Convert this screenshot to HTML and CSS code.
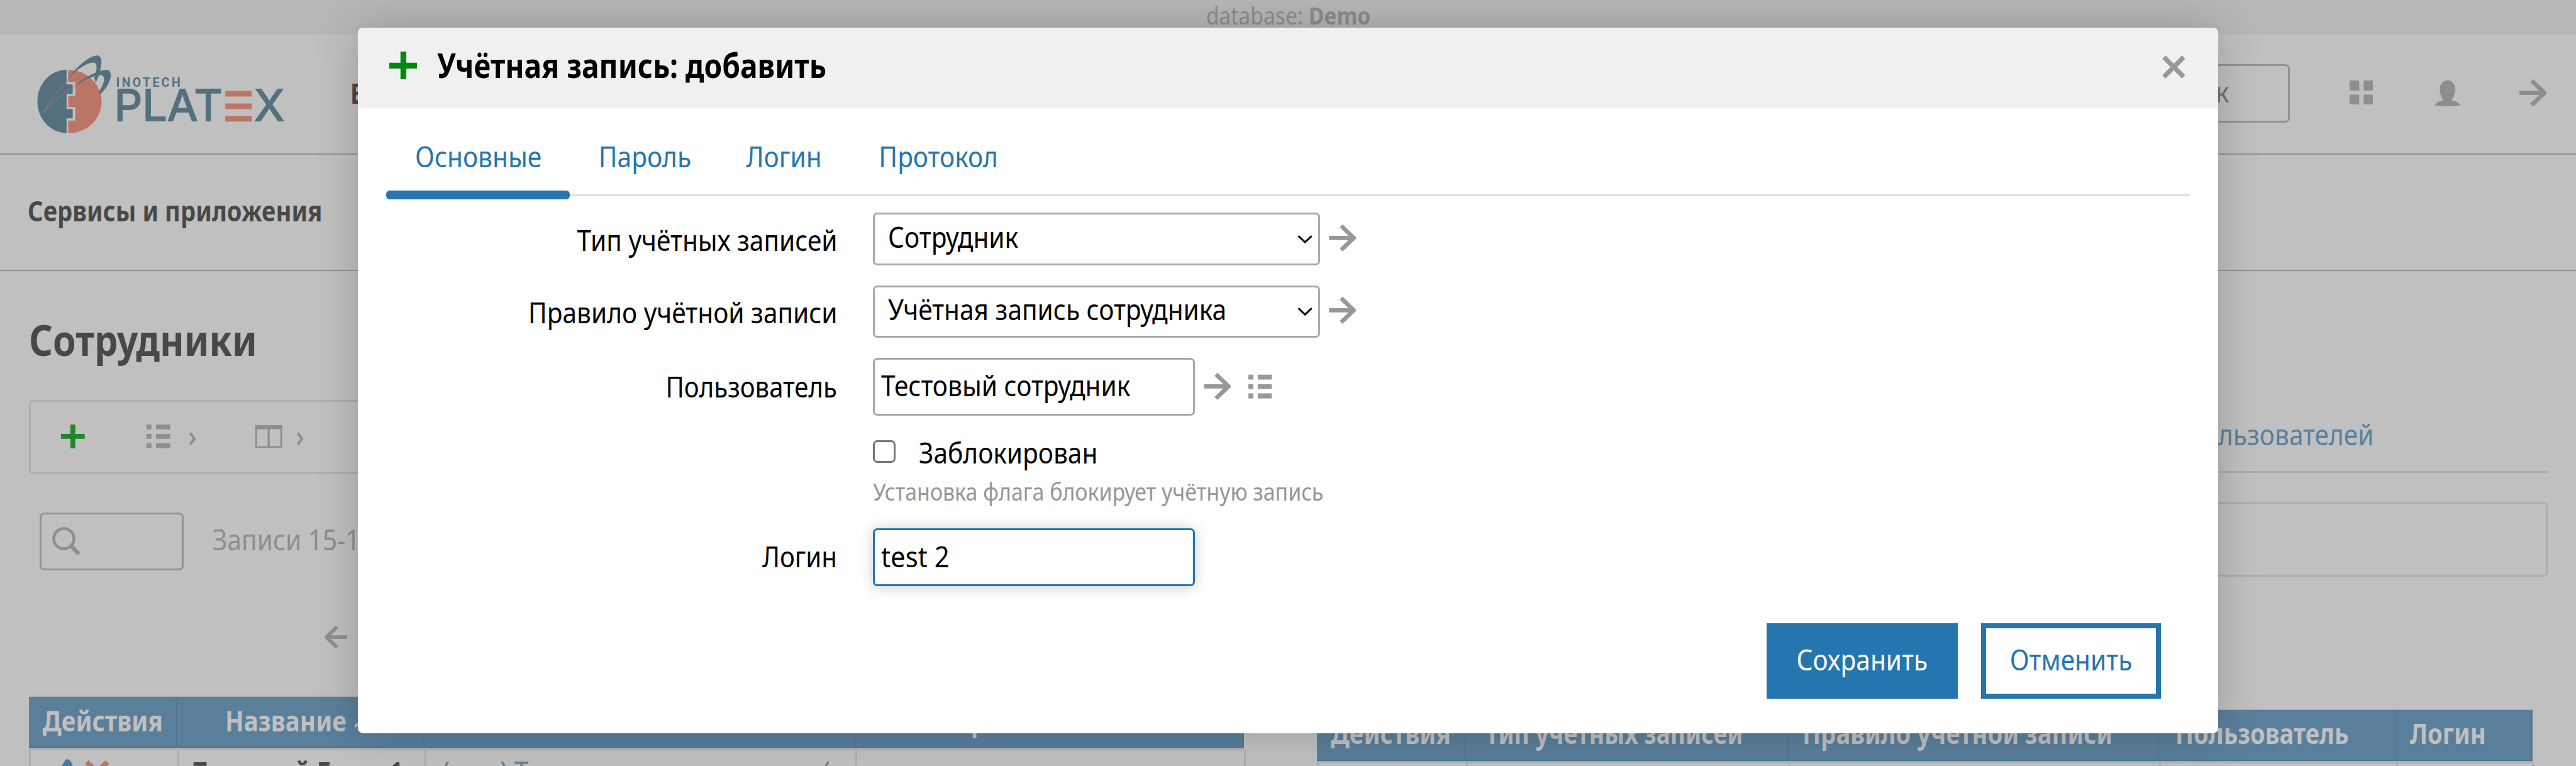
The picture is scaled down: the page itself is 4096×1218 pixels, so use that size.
FILE: index.html
```html
<!DOCTYPE html>
<html lang="ru">
<head>
<meta charset="utf-8">
<title>Platex</title>
<link rel="stylesheet" href="styles.css">
</head>
<body>
<svg width="0" height="0" class="defs">
  <symbol id="arrow" viewBox="0 0 60 60"><path d="M0 30H54M27 3L55 30L27 57" fill="none" stroke="currentColor" stroke-width="9.5"/></symbol>
  <symbol id="list" viewBox="0 0 53 53"><path d="M0 0H11V11H0ZM21 0H53V11H21ZM0 21H11V32H0ZM21 21H53V32H21ZM0 42H11V53H0ZM21 42H53V53H21Z" fill="currentColor"/></symbol>
  <symbol id="chev" viewBox="0 0 15 30"><path d="M2 2L11.500 15L2 28" fill="none" stroke="currentColor" stroke-width="5.500"/></symbol>
</svg>

<div class="topbar"><span class="t mid">database: <b>Demo</b></span></div>

<header class="header">
  <svg class="logo" viewBox="150 220 1010 330">
    <path d="M270 284A119 129 0 0 0 270 542V482H295V444H270V382H295V344H270Z" fill="#54707f"/>
    <path d="M277 284A136 129.500 0 0 1 277 543V491H306V436H277V390H306V334H277Z" fill="#bb7565"/>
    <path fill-rule="evenodd" d="M268 330C305 280 352 232 392 226C416 224 416 256 407 286C401 312 395 325 389 336L383 318C392 292 398 262 384 255C352 252 305 288 268 330Z" fill="#54707f"/>
    <path d="M300 352C345 315 398 283 436 284C458 290 452 318 440 342C430 362 416 376 405 386L403 370C420 350 430 315 416 307C390 300 340 328 300 352Z" fill="#54707f"/>
    <path d="M175 460C205 410 240 360 284 318M175 460C215 415 255 375 312 347" fill="none" stroke="#bb7565" stroke-width="2.500"/>
    <text class="logo-small" x="472" y="353" textLength="262" lengthAdjust="spacing">INOTECH</text>
    <text class="logo-word" x="464" y="493" textLength="442" lengthAdjust="spacingAndGlyphs">PLAT</text>
    <text class="logo-bars" x="909" y="491" textLength="125" lengthAdjust="spacingAndGlyphs">☰</text>
    <text class="logo-word" x="1036" y="493" textLength="122" lengthAdjust="spacingAndGlyphs">X</text>
  </svg>
  <b class="menu-item t b84">В</b>
  <div class="search-top"><span class="t">Поиск</span></div>
  <svg class="i-grid" viewBox="0 0 53 54"><path d="M0 0H21.500V22.500H0ZM31.500 0H53V22.500H31.500ZM0 31.500H21.500V54H0ZM31.500 31.500H53V54H31.500Z" fill="#8b8f8f"/></svg>
  <svg class="i-user" viewBox="0 0 58 60"><path d="M29 1C39 1 46 9 46 20C46 32 42 40 38 46C48 47 55 51 57 57C40 60 18 60 1 57C3 51 10 47 20 46C16 40 12 32 12 20C12 9 19 1 29 1Z" fill="#8b8f8f"/></svg>
  <svg class="i-exit"><use href="#arrow"/></svg>
</header>

<nav class="subnav"><b class="t b84">Сервисы и приложения</b></nav>

<main class="main">
  <section class="left">
    <h1 class="title"><span class="t b87">Сотрудники</span></h1>
    <div class="toolbar">
      <svg class="i-plus" viewBox="0 0 53 53"><path d="M0 26.500H53M26.500 0V53" fill="none" stroke="#22862a" stroke-width="11"/></svg>
      <svg class="i-list"><use href="#list"/></svg>
      <svg class="i-chev"><use href="#chev"/></svg>
      <svg class="i-table" viewBox="0 0 60 51"><path d="M0 0H60V51H0ZM4 9H27.500V47H4ZM32 9H56V47H32Z" fill="#8b8f8f" fill-rule="evenodd"/></svg>
      <svg class="i-chev last"><use href="#chev"/></svg>
    </div>
    <div class="filter">
      <div class="search"><svg class="i-search" viewBox="0 0 64 64"><circle cx="26" cy="26" r="22.500" fill="none" stroke="#8b8f8f" stroke-width="6.500"/><path d="M41 41L60 60" stroke="#8b8f8f" stroke-width="9" fill="none"/></svg></div>
      <span class="t records">Записи 15-15</span>
    </div>
    <div class="pager"><svg class="i-back"><use href="#arrow"/></svg></div>
    <div class="grid people head">
      <div class="center"><b class="t mid b85">Действия</b></div>
      <div class="name"><b class="t b85">Название</b><svg class="sort" viewBox="0 0 36 18"><path d="M3 16L18 4L33 16" fill="none" stroke="#a9b6cc" stroke-width="6"/></svg></div>
      <div></div>
      <div class="note"><b class="t b85">Примечание</b></div>
    </div>
    <div class="grid people row">
      <div class="acts">
        <svg class="i-pen" viewBox="0 0 40 60"><path d="M0 40L22 6C26 -3 42 10 38 24L16 58H0Z" fill="#437ba6"/></svg>
        <svg class="i-del" viewBox="0 0 54 54"><path d="M4 4L50 50M50 4L4 50" fill="none" stroke="#bb7565" stroke-width="12"/></svg>
      </div>
      <div class="person"><b class="t b84">Тестовый Гость 1</b></div>
      <div class="link"><span class="t">(тест) Тестовое наименование (</span></div>
      <div></div>
    </div>
  </section>
  <section class="right">
    <div class="rtabs"><span class="t to-right">Группы пользователей</span></div>
    <div class="panel"></div>
    <div class="grid accounts head">
      <div class="center"><b class="t mid b85">Действия</b></div>
      <div class="type"><b class="t b82">Тип учётных записей</b></div>
      <div><b class="t b84">Правило учётной записи</b></div>
      <div class="user"><b class="t b84">Пользователь</b></div>
      <div><b class="t b84">Логин</b></div>
    </div>
    <div class="grid accounts row"><div></div><div></div><div></div><div></div><div></div></div>
  </section>
</main>

<div class="modal">
  <div class="modal-head">
    <svg class="m-plus" viewBox="0 0 63 62"><path d="M0 31.500H63M31.500 0V62" fill="none" stroke="#008a0c" stroke-width="13"/></svg>
    <b class="t modal-title">Учётная запись: добавить</b>
    <svg class="m-close" viewBox="0 0 52 52"><path d="M4 4L48 48M48 4L4 48" fill="none" stroke="#959999" stroke-width="10.500"/></svg>
  </div>
  <div class="tabs">
    <div class="tab active"><span class="t mid">Основные</span></div>
    <div class="tab two"><span class="t mid">Пароль</span></div>
    <div class="tab three"><span class="t mid">Логин</span></div>
    <div class="tab four"><span class="t mid">Протокол</span></div>
  </div>
  <div class="form">
    <div class="frow">
      <label class="down3"><span class="t to-right">Тип учётных записей</span></label>
      <div class="select"><span class="t">Сотрудник</span><svg class="down" viewBox="0 0 34 20"><path d="M2 3L17 17L32 3" fill="none" stroke="#111" stroke-width="4.500"/></svg></div>
      <svg class="go"><use href="#arrow"/></svg>
    </div>
    <div class="frow second">
      <label class="down3"><span class="t to-right">Правило учётной записи</span></label>
      <div class="select"><span class="t">Учётная запись сотрудника</span><svg class="down" viewBox="0 0 34 20"><path d="M2 3L17 17L32 3" fill="none" stroke="#111" stroke-width="4.500"/></svg></div>
      <svg class="go"><use href="#arrow"/></svg>
    </div>
    <div class="frow third">
      <label><span class="t to-right narrow">Пользователь</span></label>
      <div class="input"><span class="t">Тестовый сотрудник</span></div>
      <svg class="go"><use href="#arrow"/></svg>
      <svg class="pick"><use href="#list"/></svg>
    </div>
    <div class="frow check">
      <label></label>
      <span class="box"></span>
      <span class="t">Заблокирован</span>
    </div>
    <div class="frow help">
      <label></label>
      <span class="t">Установка флага блокирует учётную запись</span>
    </div>
    <div class="frow login">
      <label><span class="t to-right narrow">Логин</span></label>
      <div class="input focus"><span class="t b93">test 2</span></div>
    </div>
  </div>
  <div class="buttons">
    <div class="btn save"><span class="t mid">Сохранить</span></div>
    <div class="btn cancel"><span class="t mid">Отменить</span></div>
  </div>
</div>
</body>
</html>
```
FILE: styles.css
```css
/* 1rem is 1/57.6 of the window width */
html { font-size: calc(100vw / 57.6); }
* { box-sizing: border-box; }
body {
  margin: 0; height: 100vh; overflow: hidden; position: relative;
  background: #c0c0c0; color: #484848;
  font-family: "Noto Sans", sans-serif; font-size: .64rem; line-height: .64rem;
}
svg { display: block; flex: none; }
.defs { position: absolute; }

/* condensed text */
.t { display: inline-block; white-space: nowrap; flex: none; transform: scaleX(.893); transform-origin: left center; }
.mid { transform-origin: center; }
.to-right { transform-origin: right center; }
.narrow { transform: scaleX(.882); }
.b82 { transform: scaleX(.82); }
.b84 { transform: scaleX(.84); }
.b85 { transform: scaleX(.85); }
.b87 { transform: scaleX(.865); }
.b93 { transform: scaleX(.92); }

.topbar { height: .78rem; background: #b7b7b7; color: #8a8e8e; text-align: center; font-size: .53rem; line-height: .7rem; }

.header { height: 2.68rem; border-bottom: 2px solid #8f9494; display: flex; align-items: flex-start; padding-right: .65rem; color: #8b8f8f; }
.logo { width: 5.54rem; height: 1.81rem; margin: .425rem 0 0 .823rem; }
.logo-small { font: 700 50px "Roboto", sans-serif; fill: #54707f; }
.logo-word { font: 400 178px "Inter", sans-serif; fill: #54707f; stroke: #54707f; stroke-width: 5px; }
.logo-bars { font: 400 162px "DejaVu Sans", sans-serif; fill: #bb7565; stroke: #bb7565; stroke-width: 7px; }
.menu-item { margin: .98rem 0 0 1.47rem; color: #484848; }
.search-top { width: 4rem; height: 1.3rem; margin: .66rem 0 0 auto; border: 3px solid #8f9494; border-radius: .1rem; text-align: right; padding: .25rem 1.32rem 0 0; color: #6f7474; }
.search-top .t { transform-origin: right center; }
.i-grid { width: .53rem; height: .54rem; margin: 1.02rem 0 0 1.33rem; }
.i-user { width: .58rem; height: .6rem; margin: 1rem 0 0 1.37rem; }
.i-exit { width: .61rem; height: .61rem; margin: .99rem 0 0 1.33rem; }

.subnav { height: 2.6rem; border-bottom: 2px solid #8f9494; padding: .925rem 0 0 .625rem; }

.main { display: flex; justify-content: space-between; align-items: flex-start; padding: 0 .64rem; height: calc(100vh - 6.06rem); overflow: hidden; }
.left { width: 27.2rem; }
.right { width: 27.53rem; padding-top: 2.78rem; }
.title { margin: 0; padding-top: 1.06rem; height: 2.88rem; font-size: .96rem; line-height: .96rem; }
.toolbar { height: 1.67rem; border: 3px solid #aeaeae; border-radius: .1rem; display: flex; align-items: center; color: #8b8f8f; padding-left: .68rem; }
.i-plus { width: .53rem; height: .53rem; margin-top: -.03rem; }
.i-list { width: .53rem; height: .53rem; margin: -.03rem 0 0 1.39rem; }
.i-chev { width: .15rem; height: .3rem; margin: .07rem 0 0 .42rem; }
.i-table { width: .6rem; height: .51rem; margin: -.03rem 0 0 1.33rem; }
.i-chev.last { margin-left: .38rem; }
.filter { display: flex; margin-top: .85rem; color: #8b8f8f; }
.search { width: 3.22rem; height: 1.3rem; margin-left: .24rem; border: 3px solid #8f9494; border-radius: .1rem; padding: .28rem 0 0 .24rem; }
.i-search { width: .64rem; height: .64rem; }
.records { margin: .29rem 0 0 .66rem; }
.pager { height: 2.8rem; padding: 1.22rem 0 0 6.61rem; color: #8b8f8f; }
.i-back { width: .51rem; height: .54rem; transform: scaleX(-1); }

.grid { display: grid; }
.people { grid-template-columns: 3.33rem 5.52rem 9.64rem 8.68rem; width: 27.18rem; }
.accounts { grid-template-columns: 3.33rem 7.22rem 8.28rem 5.3rem 3.04rem; width: 27.18rem; }
.grid > div { padding-left: .31rem; border-right: 3px solid #aeaeae; display: flex; align-items: flex-start; min-width: 0; }
.grid.head { height: 1.16rem; border-top: 2px solid #afb1b2; border-bottom: 2px solid #4f7591; background: #5a7f9b; color: #c0c0c0; }
.grid.head > div { padding-top: .2rem; border-color: #52758f; border-right-width: 2px; }
.grid .center { padding-left: 0; justify-content: center; }
.grid .name { padding-left: 1.07rem; }
.sort { width: .36rem; height: .18rem; margin: .3rem 0 0 -.33rem; }
.grid .note { padding-left: 2.16rem; }
.grid.row { height: .5rem; border-left: 3px solid #aeaeae; border-top: 3px solid #aeaeae; }
.grid .type { padding-left: .43rem; }
.grid .user { padding-left: .36rem; }
.grid .acts { padding-left: .55rem; gap: .27rem; }
.i-pen { width: .4rem; height: .6rem; margin-top: .18rem; }
.i-del { width: .54rem; height: .54rem; margin-top: .24rem; }
.grid .person { padding-left: .3rem; }
.person .t, .link .t { margin-top: .17rem; }
.grid .link { color: #5a7f9b; padding-left: .35rem; }

.rtabs { height: 1.74rem; border-bottom: 3px solid #aeaeae; color: #5a7f9b; text-align: right; padding: .56rem 3.88rem 0 0; }
.panel { height: 1.68rem; margin: .64rem 0 2.95rem; border: 3px solid #aeaeae; border-radius: .1rem; }
.right .grid { margin-left: .02rem; }

.modal {
  position: absolute; left: 8rem; top: .62rem; width: 41.6rem; height: 15.78rem;
  background: #fff; border-radius: .12rem; color: #000;
  box-shadow: 0 0 1rem rgba(0,0,0,.2);
}
.modal-head { height: 1.8rem; border-radius: .12rem .12rem 0 0; background: #f0f0f0; display: flex; padding: .54rem .74rem 0 .7rem; }
.m-plus { width: .63rem; height: .62rem; }
.modal-title { font-size: .768rem; line-height: .8rem; margin: -.1rem 0 0 .44rem; transform: scaleX(.847); }
.m-close { width: .52rem; height: .52rem; margin: .08rem 0 0 auto; }
.tabs { height: 2.04rem; margin: 0 .64rem; display: flex; color: #2575ae; background: linear-gradient(#dadfe2, #dadfe2) 0 1.92rem / 100% 3px no-repeat; }
.tab { padding-top: .76rem; text-align: center; }
.active { width: 4.1rem; display: flex; flex-direction: column; align-items: center; justify-content: space-between; }
.active::after { content: ""; width: 100%; height: .2rem; background: #2575ae; border-radius: .08rem; }
.two { width: 3.37rem; }
.three { width: 2.85rem; }
.four { width: 4.06rem; }

.form { padding-top: .3rem; }
.frow { display: flex; align-items: center; }
.frow label { width: 10.72rem; margin-right: .8rem; text-align: right; flex: none; }
.frow .down3 { padding-top: .05rem; }
.select { width: 10rem; height: 1.17rem; border: 3px solid #a9a9a9; border-radius: .1rem; display: flex; align-items: flex-start; justify-content: space-between; padding: .18rem .13rem 0 .3rem; }
.down { width: .34rem; height: .2rem; margin-top: .26rem; }
.go { width: .61rem; height: .6rem; margin: -.05rem 0 0 .2rem; color: #959999; }
.second { margin-top: .45rem; }
.third { margin-top: .45rem; height: 1.29rem; }
.third .go, .third .pick { margin-top: 0; }
.input { width: 7.2rem; height: 1.29rem; border: 3px solid #a9a9a9; border-radius: .1rem; padding: .26rem 0 0 .14rem; }
.pick { width: .53rem; height: .55rem; margin-left: .38rem; color: #959999; }
.check { margin-top: .49rem; height: .64rem; }
.check .t { margin-top: .04rem; }
.box { width: .51rem; height: .51rem; border: 3px solid #767676; border-radius: .1rem; margin-right: .51rem; }
.help { margin-top: .26rem; height: .64rem; font-size: .53rem; color: #929797; }
.help .t { transform: scaleX(.899); }
.login { margin-top: .5rem; }
.login label { padding-bottom: .03rem; }
.focus { border-color: #2575ae; box-shadow: 0 .02rem .3rem rgba(0,0,0,.2); }
.buttons { display: flex; justify-content: flex-end; gap: .51rem; margin-top: .83rem; padding-right: 1.28rem; }
.btn { height: 1.68rem; padding-top: .49rem; text-align: center; }
.save { width: 4.28rem; background: #2575ae; color: #fff; }
.cancel { width: 4.03rem; border: 8px solid #2575ae; color: #2575ae; padding-top: .38rem; }
.i-chev.last { margin-left: .33rem; }
```
